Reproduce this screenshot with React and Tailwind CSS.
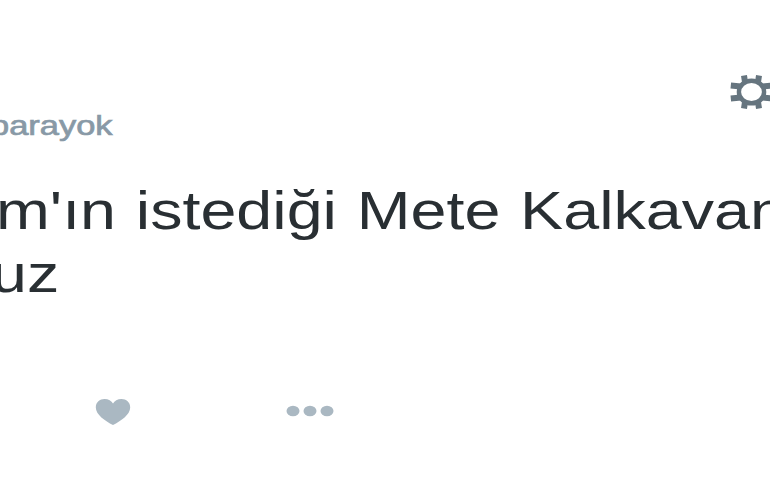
function GearIcon() {
  return (
    <svg viewBox="0 0 42 36" className="block w-[42px] h-[36px] shrink-0" fill="none" stroke="#66757f">
      <ellipse cx="21.500" cy="18" rx="12.600" ry="11.300" strokeWidth="4.400" />
      <path
        d="M14 1.500L15 8M29 1.500L28 8M14 34.500L15 28M29 34.500L28 28M.8 11.500L11 12.500M.8 24.500L11 23.500M42 11.500L32 12.500M42 24.500L32 23.500"
        strokeWidth="6"
      />
    </svg>
  )
}

function HeartIcon() {
  return (
    <svg viewBox="0 0 36 28" className="block w-9 h-7" fill="#aab8c2">
      <path d="M18 27C10 23 .8 16.500 .8 9.500C.8 4 4.800 1 9.500 1C13.500 1 16.500 2.800 18 5.500C19.500 2.800 22.500 1 26.500 1C31.200 1 35.200 4 35.200 9.500C35.200 16.500 26 23 18 27Z" />
    </svg>
  )
}

function MoreIcon() {
  return (
    <svg viewBox="0 0 48 12" className="block w-12 h-3 -mt-0.5" fill="#aab8c2">
      <ellipse cx="7" cy="6" rx="6.500" ry="5.300" />
      <ellipse cx="24" cy="6" rx="6.500" ry="5.300" />
      <ellipse cx="41" cy="6" rx="6.500" ry="5.300" />
    </svg>
  )
}

export default function App() {
  return (
    <div className="w-[770px] h-[485px] overflow-hidden bg-white font-['Liberation_Sans',sans-serif]">
      <header className="flex justify-between h-[174px]">
        <p className="pt-[110px] -ml-[10px] text-[28px] leading-8 text-[#8899a6] whitespace-nowrap origin-left scale-x-[1.23] [-webkit-text-stroke:0.7px_#8899a6]">
          parayok
        </p>
        <div className="pt-[74px] -mr-0.5 shrink-0">
          <GearIcon />
        </div>
      </header>

      <div className="-ml-1 h-[222px] text-[53px] leading-[63px] text-[#292f33] whitespace-nowrap origin-left scale-x-[1.219] [word-spacing:1.5px]">
        <p className="pt-[5px]">m'ın istediği Mete Kalkavan</p>
        <p className="-ml-1">uz</p>
      </div>

      <footer className="flex items-center pt-0.5 pl-[95px] gap-[155px]">
        <HeartIcon />
        <MoreIcon />
      </footer>
    </div>
  )
}
